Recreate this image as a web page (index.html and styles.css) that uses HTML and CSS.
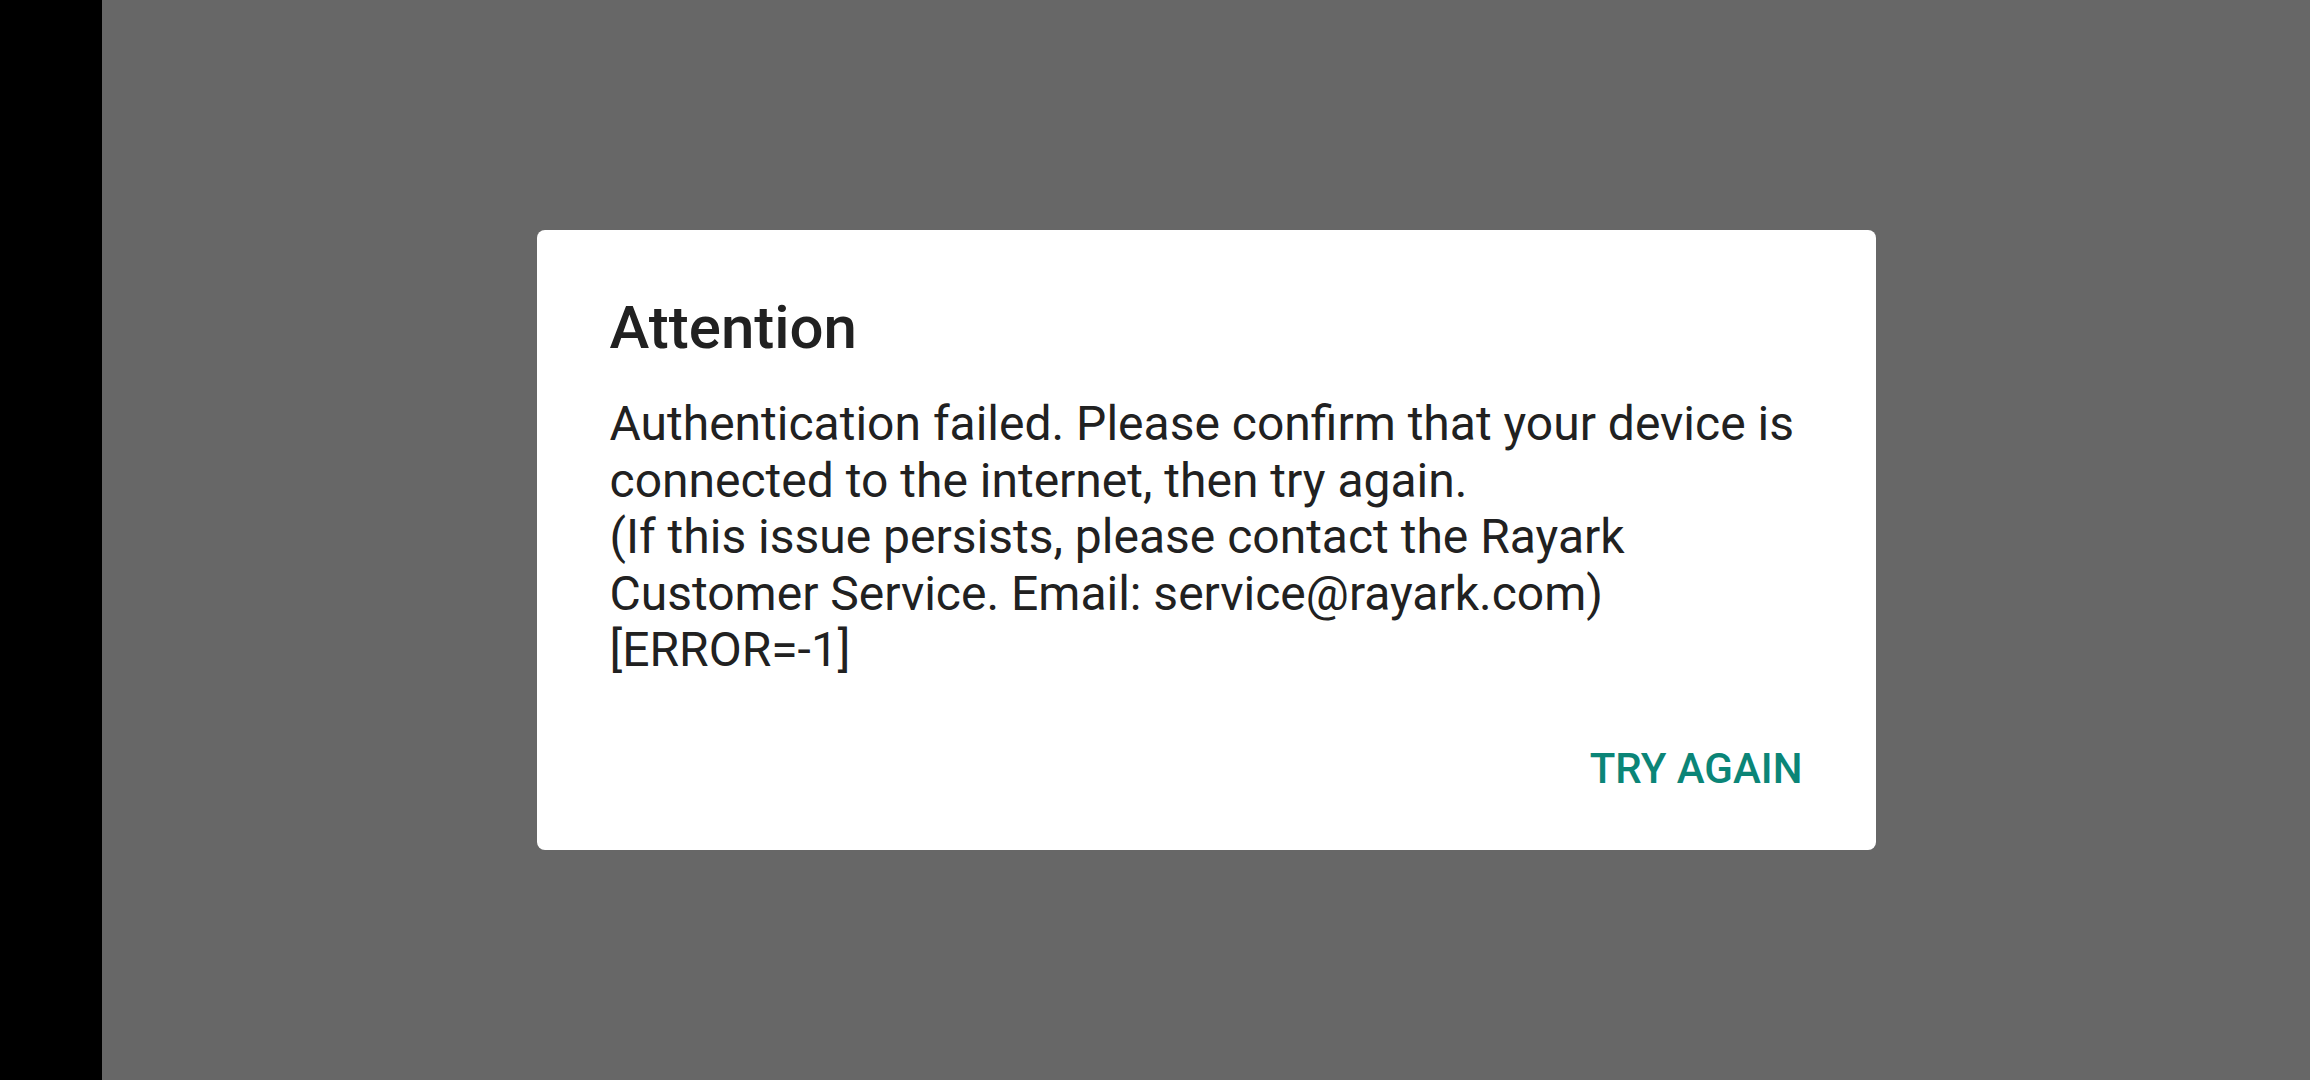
FILE: index.html
```html
<!DOCTYPE html>
<html>
<head>
    <meta charset="UTF-8">
    <title>Attention</title>
    <link rel="stylesheet" href="styles.css">
</head>
<body>
    <div class="screen">
        <div class="side_bar"></div>
        <main class="backdrop">
            <div class="dialog">
                <h2 class="dialog_title">Attention</h2>
                <p class="dialog_message">
                    Authentication failed. Please confirm that your device is connected to the internet, then try again.<br>
                    (If this issue persists, please contact the Rayark Customer Service. Email: service@rayark.com)<br>
                    [ERROR=-1]
                </p>
                <div class="dialog_actions">
                    <button class="dialog_button">Try again</button>
                </div>
            </div>
        </main>
    </div>
</body>
</html>
```

FILE: styles.css
```css
* {
    margin: 0;
    padding: 0;
    box-sizing: border-box;
}

:root {
    --clr-scrim: #676767;
    --clr-text: #212121;
    --clr-teal: #0b8577;
}

body {
    font-family: Roboto, 'Noto Sans', sans-serif;
    background-color: black;
}

.screen {
    display: flex;
    width: 2310px;
    height: 1080px;
}

.side_bar {
    width: 102px;
    background-color: black;
}

.backdrop {
    flex: 1;
    background-color: var(--clr-scrim);
    display: flex;
    align-items: center;
    justify-content: center;
}

.dialog {
    width: 1339px;
    height: 620px;
    background-color: white;
    border-radius: 8px;
    padding: 62px 73px 0 73px;
    color: var(--clr-text);
}

.dialog_title {
    font-size: 60px;
    font-weight: 500;
    line-height: 1.2;
    margin-bottom: 32px;
}

.dialog_message {
    font-size: 48px;
    line-height: 56.5px;
}

.dialog_actions {
    display: flex;
    justify-content: flex-end;
    margin-top: 65px;
}

.dialog_button {
    border: none;
    background: none;
    font-family: inherit;
    font-size: 42px;
    font-weight: 500;
    text-transform: uppercase;
    color: var(--clr-teal);
    cursor: pointer;
}
```
